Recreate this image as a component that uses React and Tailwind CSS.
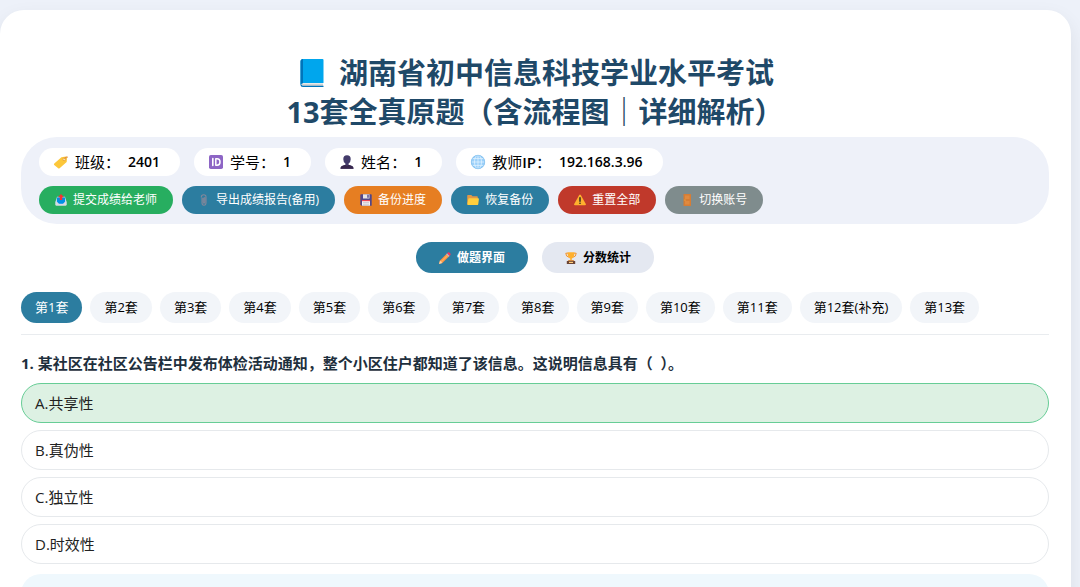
import React, { useState } from 'react';

const BookIcon = () => (
  <svg className="w-6 h-7 shrink-0" viewBox="0 0 24 28" aria-hidden="true">
    <path d="M3 0H22.500Q23.500 0 23.500 1V24H3Q0.500 24 0.500 26V2.500Q0.500 0 3 0Z" fill="#00a6ed" />
    <path d="M0.500 2.500Q0.500 0 3 0V24.500Q0.500 24.500 0.500 26Z" fill="#0074ba" />
    <path d="M3 24.500H23V27H3Q1.500 27 1.500 25.800T3 24.500Z" fill="#d3d3d3" />
    <path d="M0.500 25.500Q0.500 28 3 28H23.500V26.700H3Q1.800 26.700 1.800 25.500Z" fill="#0074ba" />
  </svg>
);

const TagIcon = () => (
  <svg className="w-4 h-4 shrink-0" viewBox="0 0 16 16" aria-hidden="true">
    <path d="M1.300 9.600L8.400 3.300L13 2.600Q14 2.600 14 3.700L13.700 8L6.600 14.200Q5.700 14.900 4.900 14L1.200 11Q0.500 10.300 1.300 9.600Z" fill="#fcc73a" />
    <circle cx="11.200" cy="5.300" r="1.400" fill="#fff0c0" stroke="#e59a2c" strokeWidth="0.800" />
    <path d="M11.200 5.300Q13 1.800 15 3.200" fill="none" stroke="#d97b3a" strokeWidth="0.800" />
  </svg>
);

const IdIcon = () => (
  <svg className="w-4 h-4 shrink-0" viewBox="0 0 16 16" aria-hidden="true">
    <rect x="1" y="1" width="14" height="14" rx="1.800" fill="#8d65c5" />
    <path d="M4.800 4.500V11.500" stroke="#fff" strokeWidth="1.600" strokeLinecap="round" />
    <path d="M7.800 4.800H9Q12 4.800 12 8T9 11.200H7.800Z" fill="none" stroke="#fff" strokeWidth="1.500" strokeLinejoin="round" />
  </svg>
);

const UserIcon = () => (
  <svg className="w-4 h-4 shrink-0" viewBox="0 0 16 16" aria-hidden="true">
    <path d="M8 1.200Q11.800 1.200 11.700 5.200Q11.600 8.800 9.500 9.800V10.800L13 12Q14.500 12.500 14.500 14.800H1.500Q1.500 12.500 3 12L6.500 10.800V9.800Q4.400 8.800 4.300 5.200Q4.200 1.200 8 1.200Z" fill="#433b6b" />
    <path d="M1.500 14.800Q1.500 12.500 3 12L6.500 10.800L8 12L9.500 10.800L13 12Q14.500 12.500 14.500 14.800Z" fill="#37264c" />
  </svg>
);

const GlobeIcon = () => (
  <svg className="w-4 h-4 shrink-0" viewBox="0 0 16 16" aria-hidden="true">
    <circle cx="8" cy="8" r="7" fill="#9bd0fa" />
    <g fill="none" stroke="#e8f6ff" strokeWidth="0.700">
      <ellipse cx="8" cy="8" rx="3.500" ry="7" />
      <path d="M8 1V15M1 8H15M2 4.600H14M2 11.400H14" />
    </g>
    <circle cx="8" cy="8" r="6.700" fill="none" stroke="#6fb5ea" strokeWidth="0.600" />
  </svg>
);

const OutboxIcon = () => (
  <svg className="w-3 h-3 shrink-0" viewBox="0 0 12 12" aria-hidden="true">
    <path d="M2 2.800H10L11.500 7.500V11H0.500V7.500Z" fill="#b9d8ee" />
    <path d="M2 3.500H10V8.800L8.500 9.800H3.500L2 8.800Z" fill="#0090e6" />
    <path d="M0.500 7.800H2L4 10H8L10 7.800H11.500V11Q11.500 11.800 10.700 11.800H1.300Q0.500 11.800 0.500 11Z" fill="#d6dbe2" />
    <path d="M6 0L9 3.300H7.200V6H4.800V3.300H3Z" fill="#f8312f" />
  </svg>
);

const ClipIcon = () => (
  <svg className="w-3 h-3 shrink-0" viewBox="0 0 12 12" aria-hidden="true">
    <path d="M4 4V8.800Q4 11.300 6 11.300T8 8.800V3Q8 0.800 5.700 0.800T3.300 3M5.300 4V8Q5.300 9.200 6 9.200T6.700 8V3.500" fill="none" stroke="#84879a" strokeWidth="1.100" strokeLinecap="round" />
  </svg>
);

const FloppyIcon = () => (
  <svg className="w-3 h-3 shrink-0" viewBox="0 0 12 12" aria-hidden="true">
    <path d="M0.300 1Q0.300 0.300 1 0.300H11Q11.700 0.300 11.700 1V11.700H1.500L0.300 10.500Z" fill="#50468a" />
    <path d="M3 0.300H9.500V4.500H3Z" fill="#e6e6e6" />
    <path d="M7.300 0.800H8.700V3.800H7.300Z" fill="#50468a" />
    <path d="M2 6H10V11.700H2Z" fill="#f4f4f4" />
    <path d="M2 6H10V7.200H2Z" fill="#ef4856" />
    <path d="M3 8.600H9M3 10.200H9" stroke="#b4acbc" strokeWidth="0.600" />
  </svg>
);

const FolderIcon = () => (
  <svg className="w-3 h-3 shrink-0" viewBox="0 0 12 12" aria-hidden="true">
    <path d="M0.200 1.800Q0.200 1 1 1H4.300L5.500 2.300H10Q10.800 2.300 10.800 3V10.800H1Q0.200 10.800 0.200 10Z" fill="#e19747" />
    <path d="M2.200 4.200H11.200Q12 4.200 11.900 5L11.300 10Q11.200 10.900 10.400 10.900H1Q0.300 10.900 0.400 10L1.300 5Q1.400 4.200 2.200 4.200Z" fill="#ffce3d" />
  </svg>
);

const WarningIcon = () => (
  <svg className="w-3 h-3 shrink-0" viewBox="0 0 12 12" aria-hidden="true">
    <path d="M5.200 1Q6 -0.200 6.800 1L11.800 10Q12.300 11.300 11 11.300H1Q-0.300 11.300 0.200 10Z" fill="#ffb02e" />
    <path d="M6 3.800V7.300" stroke="#212121" strokeWidth="1.400" strokeLinecap="round" />
    <circle cx="6" cy="9.300" r="0.800" fill="#212121" />
  </svg>
);

const DoorIcon = () => (
  <svg className="w-3 h-3 shrink-0" viewBox="0 0 12 12" aria-hidden="true">
    <rect x="2.500" y="0" width="7.500" height="12" rx="0.500" fill="#d67d35" />
    <path d="M4 1.500H8.500V5H4ZM4 7H8.500V10.500H4Z" fill="#e08a40" />
    <circle cx="4" cy="6" r="0.600" fill="#f9c23c" />
  </svg>
);

const PencilIcon = () => (
  <svg className="w-3 h-3 shrink-0" viewBox="0 0 12 12" aria-hidden="true">
    <path d="M8 1.500L10.500 4L3.300 11L0 12L1 8.500Z" fill="#ff9140" />
    <path d="M8.800 2.300L9.700 3.200L2.500 10.300L1.700 9.400Z" fill="#ffb15c" />
    <path d="M1 8.500L3.300 11L0 12Z" fill="#ffd3a8" />
    <path d="M7.200 2.300L9.700 4.800L10.700 3.800L8.200 1.300Z" fill="#b8b3c4" />
    <path d="M8.200 1.300Q9.500 -0.500 11 1T10.700 3.800Z" fill="#f8315f" />
  </svg>
);

const TrophyIcon = () => (
  <svg className="w-3 h-3 shrink-0" viewBox="0 0 12 12" aria-hidden="true">
    <path d="M3 1.200H0.800Q0.800 4.800 4 5.200M9 1.200H11.200Q11.200 4.800 8 5.200" fill="none" stroke="#f3922b" strokeWidth="1" />
    <path d="M2.500 0.200H9.500Q9.500 5.500 6.800 6.500V8.500H5.200V6.500Q2.500 5.500 2.500 0.200Z" fill="#ffb02e" />
    <path d="M3.500 8H8.500L9.200 9H2.800Z" fill="#d3883e" />
    <path d="M1.800 9H10.200V12H1.800Z" fill="#6d4534" />
    <path d="M4 9.800H8V11H4Z" fill="#ffce7c" />
  </svg>
);

const profile = [
  { label: '班级', value: '2401', Icon: TagIcon },
  { label: '学号', value: '1', Icon: IdIcon },
  { label: '姓名', value: '1', Icon: UserIcon },
  { label: '教师', suffix: 'IP', value: '192.168.3.96', Icon: GlobeIcon },
];

const actions = [
  { text: '提交成绩给老师', Icon: OutboxIcon, color: 'bg-[#27ae60]' },
  { text: '导出成绩报告(备用)', Icon: ClipIcon, color: 'bg-[#2c7da0]' },
  { text: '备份进度', Icon: FloppyIcon, color: 'bg-[#e67e22]' },
  { text: '恢复备份', Icon: FolderIcon, color: 'bg-[#2c7da0]' },
  { text: '重置全部', Icon: WarningIcon, color: 'bg-[#c0392b]' },
  { text: '切换账号', Icon: DoorIcon, color: 'bg-[#7f8c8d]' },
];

const views = [
  { id: 'quiz', text: '做题界面', Icon: PencilIcon },
  { id: 'stats', text: '分数统计', Icon: TrophyIcon },
];

const papers = [
  '第1套', '第2套', '第3套', '第4套', '第5套', '第6套', '第7套',
  '第8套', '第9套', '第10套', '第11套', '第12套(补充)', '第13套',
];

const options = ['A.共享性', 'B.真伪性', 'C.独立性', 'D.时效性'];

const App = () => {
  const [view, setView] = useState('quiz');
  const [paper, setPaper] = useState(0);
  const [answer, setAnswer] = useState(0);

  return (
    <div className="min-h-screen overflow-hidden bg-[#edf1f9] pt-[10px] pr-[9px] font-['Open_Sans','Noto_Sans_CJK_SC',sans-serif] text-black">
      <main className="min-h-screen rounded-t-3xl bg-white pt-[43px] pr-[22px] pl-[21px] shadow-[0_8px_20px_rgba(0,0,0,0.08)]">
        <h1 className="text-center text-[29px] leading-[39px] font-bold text-[#1f4968]">
          <span className="flex items-center justify-center gap-[15px] pl-1">
            <BookIcon />
            湖南省初中信息科技学业水平考试
          </span>
          <span className="block">13套全真原题（含流程图｜详细解析）</span>
        </h1>

        <section className="mt-[6px] rounded-[36px] bg-[#eef1f9] px-[18px] pt-[11px] pb-[10px]">
          <div className="flex flex-wrap gap-[14px]">
            {profile.map(({ label, suffix, value, Icon }) => (
              <div key={label} className="flex h-7 items-center rounded-full bg-white pr-5 pl-[14px] text-[15px]">
                <Icon />
                <span className="ml-[6px]">
                  {label}
                  {suffix && <span className="font-semibold">{suffix}</span>}：
                </span>
                <span className="ml-2 text-sm font-semibold">{value}</span>
              </div>
            ))}
          </div>
          <div className="mt-[10px] flex flex-wrap gap-[9px]">
            {actions.map(({ text, Icon, color }) => (
              <button
                key={text}
                type="button"
                className={`${color} flex h-7 items-center gap-[6px] rounded-full px-4 text-xs text-white`}
              >
                <Icon />
                {text}
              </button>
            ))}
          </div>
        </section>

        <div className="mt-[18px] flex justify-center gap-[14px]">
          {views.map(({ id, text, Icon }) => (
            <button
              key={id}
              type="button"
              onClick={() => setView(id)}
              className={`flex h-[31px] items-center gap-[6px] rounded-full px-[23px] text-xs font-bold ${
                view === id ? 'bg-[#2c7da0] text-white' : 'bg-[#e4e8f1] text-black'
              }`}
            >
              <Icon />
              {text}
            </button>
          ))}
        </div>

        <nav className="mt-[19px] flex flex-wrap gap-2 border-b border-[#e9ecef] pb-[11px]">
          {papers.map((name, i) => (
            <button
              key={name}
              type="button"
              onClick={() => setPaper(i)}
              className={`h-[31px] rounded-full px-[14px] text-[13px] ${
                paper === i ? 'bg-[#2c7da0] text-white' : 'bg-[#f2f5f9] text-black'
              }`}
            >
              {name}
            </button>
          ))}
        </nav>

        <fieldset>
          <legend className="pt-4 pb-2 text-[15px] leading-6 font-bold text-[#1e2f3d]">
            1. 某社区在社区公告栏中发布体检活动通知，整个小区住户都知道了该信息。这说明信息具有（&nbsp;&nbsp;）。
          </legend>
          <div className="flex flex-col gap-[7px]">
            {options.map((text, i) => (
              <label
                key={text}
                className={`flex h-10 cursor-pointer items-center rounded-full border px-[13px] text-[15px] text-[#222] ${
                  answer === i ? 'border-[#67cd96] bg-[#ddf1e3]' : 'border-[#e6e9ec] bg-white'
                }`}
              >
                <input
                  type="radio"
                  name="question-1"
                  className="sr-only"
                  checked={answer === i}
                  onChange={() => setAnswer(i)}
                />
                {text}
              </label>
            ))}
          </div>
        </fieldset>

        <div className="mt-[10px] h-20 rounded-[20px] bg-[#eff8fd]" />
      </main>
    </div>
  );
};

export default App;
